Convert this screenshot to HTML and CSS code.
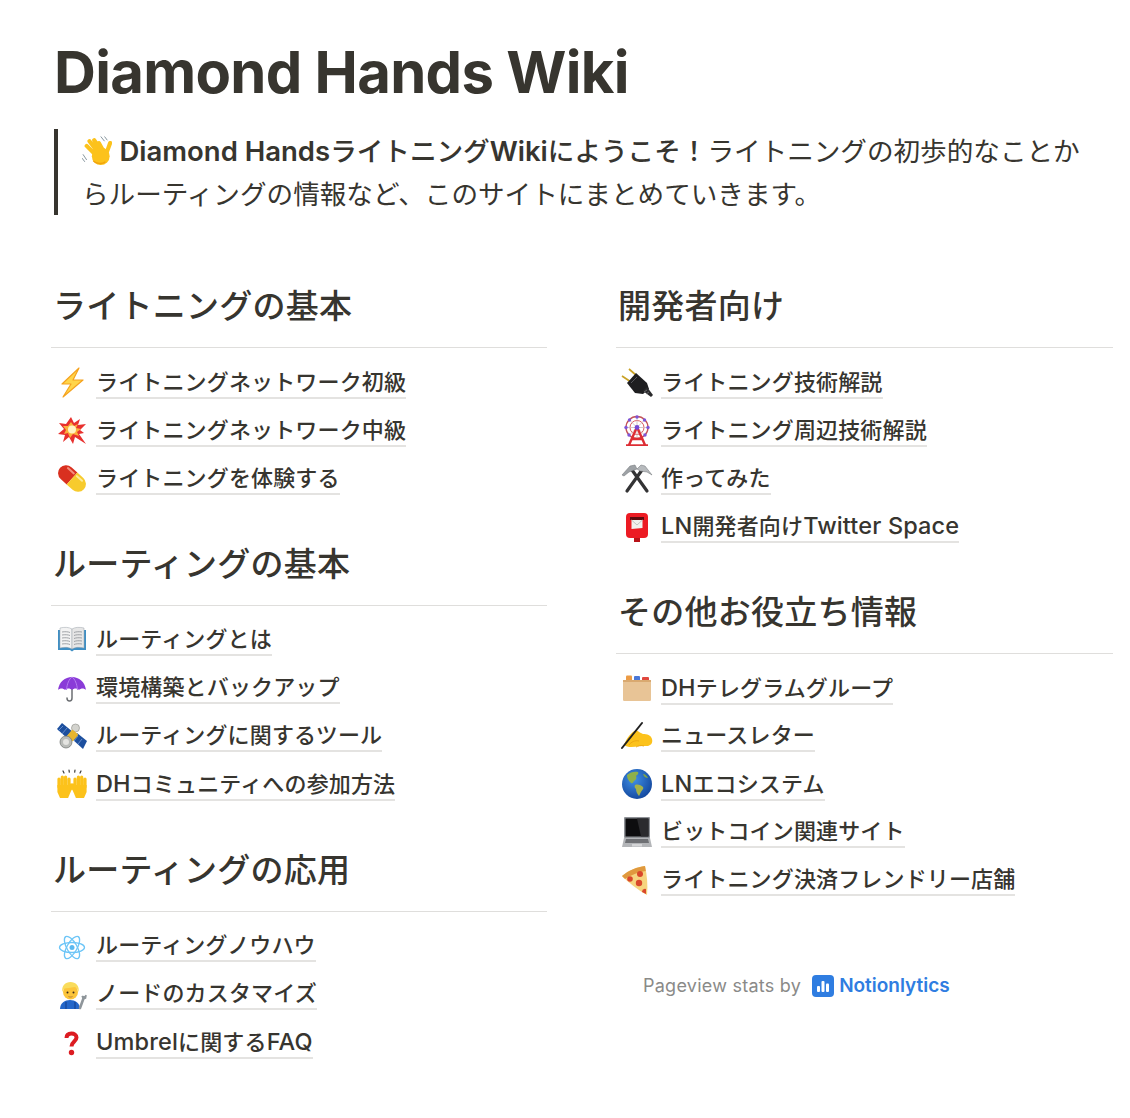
FILE: index.html
```html
<!DOCTYPE html>
<html lang="ja">
<head>
    <meta charset="UTF-8">
    <meta name="viewport" content="width=device-width, initial-scale=1.0">
    <title>Diamond Hands Wiki</title>
    <link rel="stylesheet" href="styles.css">
</head>
<body>
    <div class="page">
        <h1 class="page-title">Diamond Hands Wiki</h1>

        <blockquote class="intro">
            <svg class="wave" viewBox="0 0 32 32"><path d="M20 0l4 5M24 0l3 4M1 19l4 6M0 23l3 4" fill="none" stroke="#7f8f98" stroke-width="1"/><g fill="none" stroke="#fcc21b" stroke-width="4.400" stroke-linecap="round"><path d="M5 10l11 11M8 5l10 13M13 4l8 12M18 7l5 9M30 7l-4 11"/></g><circle cx="20" cy="21" r="9.500" fill="#fcc21b"/><path d="M12 26c3 3 9 4 13 1" fill="none" stroke="#f0a20e" stroke-width="1.400"/></svg>
            <strong><span class="en">Diamond Hands</span>ライトニング<span class="en">Wiki</span>にようこそ！</strong>ライトニングの初歩的なことからルーティングの情報など、このサイトにまとめていきます。
        </blockquote>

        <div class="columns">
            <!-- left column -->
            <div class="column">
                <h2 class="section-title">ライトニングの基本</h2>
                <ul class="link-list">
                    <li class="link-row">
                        <svg class="icon" viewBox="0 0 32 32"><polygon points="23,2 6,18 15,18 7,31 27,14 17,14" fill="#ffd54a" stroke="#f5a21e" stroke-width="1.200" stroke-linejoin="round"/></svg>
                        <a class="link-text">ライトニングネットワーク初級</a>
                    </li>
                    <li class="link-row">
                        <svg class="icon" viewBox="0 0 32 32"><polygon points="15,3 18,9 24,5 22,11 30,10 24,16 28,19 23,20 30,30 19,23 17,30 13,23 7,28 9,21 2,20 8,15 3,9 10,10" fill="#e8302e"/><polygon points="15,8 18,12 22,10 20,14 25,15 21,18 23,22 17,20 14,24 12,19 8,20 10,16 7,12 12,12" fill="#fbb03b"/><circle cx="16" cy="15.500" r="4" fill="#fff3c4"/></svg>
                        <a class="link-text">ライトニングネットワーク中級</a>
                    </li>
                    <li class="link-row">
                        <svg class="icon" viewBox="0 0 32 32"><g transform="rotate(42 16 16.500)"><path d="M16 8.500H8a8 8 0 0 0 0 16h8z" fill="#d9301f"/><path d="M16 8.500h8a8 8 0 0 1 0 16h-8z" fill="#f7cb2d"/><path d="M6 11.500h8" stroke="#f58f7c" stroke-width="2" stroke-linecap="round"/><path d="M18 11.500h7" stroke="#fdeb9a" stroke-width="2" stroke-linecap="round"/></g></svg>
                        <a class="link-text">ライトニングを体験する</a>
                    </li>
                </ul>

                <h2 class="section-title">ルーティングの基本</h2>
                <ul class="link-list">
                    <li class="link-row">
                        <svg class="icon" viewBox="0 0 32 32"><path d="M2 6h28v20H18l-2 1.500-2-1.500H2z" fill="#3f8fc4"/><path d="M4 4c4-1 9-1 12 1v20c-3-2-8-2-12-1z" fill="#f3f3f3" stroke="#9aa3aa" stroke-width=".5"/><path d="M28 4c-4-1-9-1-12 1v20c3-2 8-2 12-1z" fill="#e6e6e6" stroke="#9aa3aa" stroke-width=".5"/><path d="M6 8c3-.5 6-.3 8 .5M6 11c3-.5 6-.3 8 .5M6 14c3-.5 6-.3 8 .5M6 17c3-.5 6-.3 8 .5M6 20c3-.5 6-.3 8 .5M26 8c-3-.5-6-.3-8 .5M26 11c-3-.5-6-.3-8 .5M26 14c-3-.5-6-.3-8 .5M26 17c-3-.5-6-.3-8 .5M26 20c-3-.5-6-.3-8 .5" fill="none" stroke="#8c8f94" stroke-width=".8"/></svg>
                        <a class="link-text">ルーティングとは</a>
                    </li>
                    <li class="link-row">
                        <svg class="icon" viewBox="0 0 32 32"><path d="M16 10v16c0 4-5 4-5 0" fill="none" stroke="#6c6f73" stroke-width="1.500" stroke-linecap="round"/><path d="M2 18C3 10 9 5 16 5s13 5 14 13c-2-2-5-2-7 0-2-2-5-2-7 0-2-2-5-2-7 0-2-2-5-2-7 0z" fill="#8a3bd8"/><path d="M16 5c-3 2-5 7-5.500 13M16 5c3 2 5 7 5.500 13" fill="none" stroke="#b57cf0" stroke-width="1"/></svg>
                        <a class="link-text">環境構築とバックアップ</a>
                    </li>
                    <li class="link-row">
                        <svg class="icon" viewBox="0 0 32 32"><polygon points="1,9 6,3 17,12 12,19" fill="#1d4f9e"/><polygon points="16,19 21,13 31,21 27,29" fill="#1d4f9e"/><path d="M7 6l-5 5M11 8l-5 6M15 12l-5 5M22 16l-4 5M26 19l-4 5" stroke="#7fa3dc" stroke-width=".7"/><circle cx="19.500" cy="8" r="4" fill="#d3d3ce" stroke="#8b8b86" stroke-width=".6"/><rect x="12.500" y="11" width="8" height="9" rx="1" transform="rotate(40 16.500 15.500)" fill="#e6b530"/><circle cx="10" cy="22" r="6" fill="#b9bbb8" stroke="#6f7270" stroke-width=".7"/><circle cx="10" cy="22" r="3" fill="#e4e4e1"/></svg>
                        <a class="link-text">ルーティングに関するツール</a>
                    </li>
                    <li class="link-row">
                        <svg class="icon" viewBox="0 0 32 32"><g id="raised-hand"><path d="M3 19v-8M6.300 18V9M9.600 18V9M13 19v-8M13 23l4-6" fill="none" stroke="#fcc21b" stroke-width="3.200" stroke-linecap="round"/><path d="M1.400 17h13.200v7l-2.500 6H4l-2.600-6z" fill="#fcc21b"/></g><use href="#raised-hand" transform="translate(32) scale(-1 1)"/><path d="M7 3l1 2M13 2l.3 2.200M19 2l-.3 2.200M25 3l-1 2" stroke="#3a3a38" stroke-width="1.200" stroke-linecap="round"/></svg>
                        <a class="link-text"><span class="en">DH</span>コミュニティへの参加方法</a>
                    </li>
                </ul>

                <h2 class="section-title">ルーティングの応用</h2>
                <ul class="link-list">
                    <li class="link-row">
                        <svg class="icon" viewBox="0 0 32 32"><g fill="none" stroke="#6cc5f7" stroke-width="1.300"><ellipse cx="16" cy="17.500" rx="12.500" ry="5"/><ellipse cx="16" cy="17.500" rx="12.500" ry="5" transform="rotate(60 16 17.500)"/><ellipse cx="16" cy="17.500" rx="12.500" ry="5" transform="rotate(120 16 17.500)"/></g><circle cx="16" cy="17.500" r="2.500" fill="#5ab8ef"/></svg>
                        <a class="link-text">ルーティングノウハウ</a>
                    </li>
                    <li class="link-row">
                        <svg class="icon" viewBox="0 0 32 32"><path d="M4 31c0-6 5-9 10-9s10 3 10 9z" fill="#2467c9"/><circle cx="14.500" cy="14" r="7.500" fill="#fcc53a"/><path d="M6.500 14c-1.500-6 3-10 8-10s9.500 4 8 10c-1-3-2-4.500-4-5-4 1-8 1-10 1.500-1 .8-1.500 2-2 3.500z" fill="#f9dc5c"/><circle cx="11.500" cy="14.500" r="1" fill="#3b2a1a"/><circle cx="17.500" cy="14.500" r="1" fill="#3b2a1a"/><path d="M12.500 18.500c1 .7 3 .7 4 0" stroke="#a66b3a" fill="none" stroke-width=".8"/><path d="M10 24v7M19 24v7" stroke="#123f87" stroke-width="1"/><path d="M28 19l-4 11" stroke="#8f969b" stroke-width="2.600" stroke-linecap="round"/><path d="M26 18l1.500 2.500 2-.5.500-3" fill="none" stroke="#8f969b" stroke-width="1.600"/></svg>
                        <a class="link-text">ノードのカスタマイズ</a>
                    </li>
                    <li class="link-row">
                        <svg class="icon" viewBox="0 0 32 32"><path d="M10.500 12c0-3.500 2.500-4.500 5-4.500s5 1.500 5 4c0 4-5 4-5 9" fill="none" stroke="#dc1c22" stroke-width="4"/><circle cx="15.500" cy="26.500" r="2.700" fill="#dc1c22"/></svg>
                        <a class="link-text"><span class="en">Umbrel</span>に関する<span class="en">FAQ</span></a>
                    </li>
                </ul>
            </div>

            <!-- right column -->
            <div class="column">
                <h2 class="section-title">開発者向け</h2>
                <ul class="link-list">
                    <li class="link-row">
                        <svg class="icon" viewBox="0 0 32 32"><path d="M1 10l9 6M8 3l8 7" stroke="#c9a227" stroke-width="1.700"/><path d="M6 17L15 7l11 10 2 6-6 5-8-1z" fill="#1e1e20"/><path d="M22 25l4-4 6 8-2 2z" fill="#2a2a2c"/><path d="M10 17l6-6" stroke="#55555a" stroke-width="1"/><path d="M26 24l-3 2M28 26l-3 2" stroke="#77777a" stroke-width=".8"/></svg>
                        <a class="link-text">ライトニング技術解説</a>
                    </li>
                    <li class="link-row">
                        <svg class="icon" viewBox="0 0 32 32"><circle cx="16" cy="13.500" r="11" fill="none" stroke="#c45459" stroke-width="1.300"/><circle cx="16" cy="13.500" r="7" fill="none" stroke="#dd5a60" stroke-width="1"/><path d="M16 3v21M5 13.500h22M8.500 6l15 15M23.500 6l-15 15" stroke="#c9b8b8" stroke-width=".8"/><path d="M16 13l-8 18M16 13l8 18M5 31.500h22M11 25h10" stroke="#dd2c33" stroke-width="2.400" fill="none"/><circle cx="16" cy="13.500" r="2.400" fill="#7448d6"/><g fill="#7d55d8"><circle cx="16" cy="3" r="1.700"/><circle cx="5" cy="13.500" r="1.700"/><circle cx="27" cy="13.500" r="1.700"/><circle cx="8.500" cy="6" r="1.700"/><circle cx="23.500" cy="6" r="1.700"/><circle cx="8" cy="21" r="1.700"/><circle cx="24" cy="21" r="1.700"/></g></svg>
                        <a class="link-text">ライトニング周辺技術解説</a>
                    </li>
                    <li class="link-row">
                        <svg class="icon" viewBox="0 0 32 32"><path d="M21 8L6 29M11 8l15 21" stroke="#333335" stroke-width="3.200" stroke-linecap="round"/><path d="M1 13l8-9 5-1 2 4-8 3-5 4z" fill="#9ea2a6" stroke="#6d7175" stroke-width=".5"/><path d="M16 7l4-4 4 1 7 9-5-3-7-1z" fill="#b7babd" stroke="#6d7175" stroke-width=".5"/></svg>
                        <a class="link-text">作ってみた</a>
                    </li>
                    <li class="link-row">
                        <svg class="icon" viewBox="0 0 32 32"><rect x="13" y="26" width="6" height="7" fill="#b81218"/><rect x="5" y="3" width="22" height="25" rx="4" fill="#ec1b23"/><rect x="9" y="7" width="14" height="3" fill="#5d0a0d"/><path d="M10.500 10h11v8l-11 1z" fill="#f1f1ee"/><path d="M10.500 10l5.500 5 5.500-5" fill="none" stroke="#b8b8b4" stroke-width=".8"/></svg>
                        <a class="link-text"><span class="en">LN</span>開発者向け<span class="en">Twitter Space</span></a>
                    </li>
                </ul>

                <h2 class="section-title">その他お役立ち情報</h2>
                <ul class="link-list">
                    <li class="link-row">
                        <svg class="icon" viewBox="0 0 32 32"><rect x="5" y="3.500" width="6" height="6" rx="1" fill="#ec9b45"/><rect x="13" y="4" width="6" height="6" rx="1" fill="#4b78d8"/><rect x="21" y="5" width="7" height="6" rx="1" fill="#e0473e"/><rect x="2" y="8" width="28" height="21" rx="1.200" fill="#e8c496"/><rect x="2" y="8" width="28" height="2" fill="#d9a970"/></svg>
                        <a class="link-text"><span class="en">DH</span>テレグラムグループ</a>
                    </li>
                    <li class="link-row">
                        <svg class="icon" viewBox="0 0 32 32"><path d="M3 25C6 17 11 12 15 10c3 2 5 3 7 4 4 0 8 1 9 5s-1 6-4 7h-9c-5 1-11 2-15-1z" fill="#fcc21b"/><path d="M8 25c2-3 6-5 10-4M15 27c2-1 5-2 8-1" fill="none" stroke="#eba50e" stroke-width=".9"/><path d="M21 3L1 28" stroke="#1f1f1f" stroke-width="2" stroke-linecap="round"/></svg>
                        <a class="link-text">ニュースレター</a>
                    </li>
                    <li class="link-row">
                        <svg class="icon" viewBox="0 0 32 32"><defs><radialGradient id="globe-sea" cx=".4" cy=".35" r=".7"><stop offset="0" stop-color="#3f8fe6"/><stop offset="1" stop-color="#12469c"/></radialGradient></defs><circle cx="16" cy="16" r="15" fill="url(#globe-sea)"/><path d="M6 7c3-3 8-4 11-3 1 2-1 3-2 4 1 2 0 4-2 5-1 1-1 3-3 2-2-2-4-4-4-8z" fill="#8db04a"/><path d="M14 17c3-1 6 0 8 2 1 2-1 3-2 5-1 1-1 3-2 4-2-2-3-5-3-7-1-1-2-2-1-4z" fill="#a4b24a"/><path d="M22 6c2 0 4 2 5 4-2 0-4-1-5-4z" fill="#7fa549"/></svg>
                        <a class="link-text"><span class="en">LN</span>エコシステム</a>
                    </li>
                    <li class="link-row">
                        <svg class="icon" viewBox="0 0 32 32"><rect x="3" y="1" width="26" height="21" rx="1" fill="#8f9297"/><rect x="4.500" y="2.500" width="23" height="18" fill="#0d0d0f"/><path d="M16 2.500h11.500v18H20z" fill="#2b2b2e"/><path d="M3 22h26l2 9H1z" fill="#b3b5b8"/><path d="M5 23h22l1 4H4z" fill="#6e7074"/><rect x="11" y="28" width="10" height="2.500" fill="#d4d5d7"/></svg>
                        <a class="link-text">ビットコイン関連サイト</a>
                    </li>
                    <li class="link-row">
                        <svg class="icon" viewBox="0 0 32 32"><path d="M1 12C8 6 16 3 24 2c2 9 3 19 2 29C17 26 8 19 1 12z" fill="#f6d47f"/><path d="M1 12C8 6 16 3 24 2l.8 5C17 8 10 11 4 15z" fill="#e0993e"/><circle cx="9" cy="15" r="2.800" fill="#d9472b"/><circle cx="19" cy="10" r="3" fill="#d9472b"/><circle cx="18" cy="19" r="3.200" fill="#d9472b"/><path d="M21 28a3 3 0 0 1 4-3v5z" fill="#d9472b"/></svg>
                        <a class="link-text">ライトニング決済フレンドリー店舗</a>
                    </li>
                </ul>

                <div class="stats">
                    <span class="stats-label">Pageview stats by</span>
                    <span class="stats-brand">
                        <svg class="stats-logo" viewBox="0 0 22 22"><rect width="22" height="22" rx="4" fill="#2f7de1"/><rect x="5" y="11" width="3" height="6" rx="1" fill="#fff"/><rect x="9.500" y="6" width="3" height="11" rx="1" fill="#fff"/><rect x="14" y="8.500" width="3" height="8.500" rx="1" fill="#fff"/></svg>
                        Notionlytics
                    </span>
                </div>
            </div>
        </div>
    </div>
</body>
</html>
```

FILE: styles.css
```css
/* General Styles */
body {
    margin: 0;
    background: #fff;
    color: #37352f;
    font-family: Inter, "Noto Sans CJK JP", sans-serif;
}

.page {
    padding: 40px 17px 0 51px;
}

.page-title {
    margin: 0 0 25px 3px;
    font-size: 58px;
    line-height: 64px;
    font-weight: 700;
    letter-spacing: -0.7px;
}

.intro {
    margin: 0 12px 70px 3px;
    padding: 1px 0 0 24px;
    border-left: 4px solid #37352f;
    font-size: 26.6px;
    line-height: 42.5px;
}

.intro strong {
    font-weight: 500;
}

.intro .en {
    font-size: 27.5px;
    font-weight: 600;
}

.wave {
    width: 30px;
    height: 31px;
    vertical-align: -6px;
}

.columns {
    display: grid;
    grid-template-columns: 496px 497px;
    column-gap: 69px;
    align-items: start;
}

/* Section headings */
.section-title {
    margin: 0;
    padding: 0 0 20px 2px;
    border-bottom: 1px solid #dfdedc;
    font-size: 33px;
    line-height: 42px;
    font-weight: 500;
    letter-spacing: 0.25px;
}

/* Link rows */
.link-list {
    list-style: none;
    margin: 10px 0 40.75px;
    padding: 0;
}

.link-row {
    display: flex;
    align-items: center;
    gap: 8px;
    height: 48px;
    padding-left: 5px;
}

.icon {
    width: 32px;
    height: 32px;
    flex-shrink: 0;
}

.link-text {
    padding-top: 2px;
    font-size: 22px;
    line-height: 29px;
    font-weight: 500;
    letter-spacing: 0.15px;
    border-bottom: 2px solid #e4e3e1;
}

.link-text .en {
    font-size: 23.5px;
}

/* Footer stats */
.stats {
    display: flex;
    align-items: center;
    gap: 11px;
    margin: 66px 0 0 27px;
    height: 32px;
    font-size: 18px;
}

.stats-label {
    color: #8a8a88;
    letter-spacing: 0.25px;
}

.stats-brand {
    display: flex;
    align-items: center;
    gap: 5px;
    color: #2f7de1;
    font-size: 19px;
    font-weight: 600;
}

.stats-logo {
    width: 22px;
    height: 22px;
}
```
